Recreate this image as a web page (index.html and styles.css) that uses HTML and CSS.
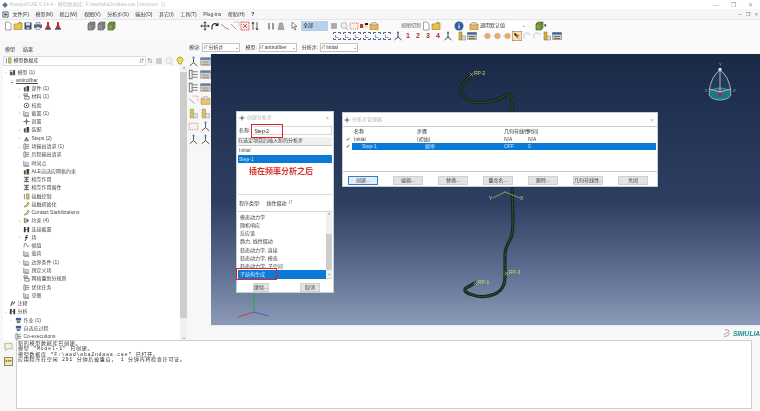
FILE: index.html
```html
<!DOCTYPE html>
<html lang="zh">
<head>
<meta charset="utf-8">
<title>Abaqus/CAE</title>
<link rel="stylesheet" href="styles.css">
</head>
<body>
<svg class="defs" width="0" height="0">
  <symbol id="doc" viewBox="0 0 10 10"><path d="M2.500 1h3.500l2 2v6h-5.500z" fill="#fff" stroke="#8a8a8a" stroke-width=".8"/></symbol>
  <symbol id="folder" viewBox="0 0 10 10"><path d="M1 3h3l1-1h4v6.500H1z" fill="#e8c24a" stroke="#9a7d20" stroke-width=".6"/><path d="M6 1l2 1" stroke="#6b9a3a"/></symbol>
  <symbol id="disk" viewBox="0 0 10 10"><path d="M1.500 1.500h7v7h-7z" fill="#3f4d6e"/><path d="M3 2h4v2.500H3z" fill="#dfe4ee"/><path d="M3.500 6h3v2.500h-3z" fill="#aab"/></symbol>
  <symbol id="print" viewBox="0 0 10 10"><path d="M3 1.500h4v2H3z" fill="#ddd" stroke="#666" stroke-width=".5"/><path d="M1 3.500h8v3.500H1z" fill="#56688a"/><path d="M3 6h4v2.500H3z" fill="#eee" stroke="#666" stroke-width=".5"/></symbol>
  <symbol id="flask" viewBox="0 0 10 10"><path d="M4 1h2v3l2 4.500H2L4 4z" fill="#b9333a"/><path d="M2.500 7h5l.5 1.500H2z" fill="#555"/></symbol>
  <symbol id="cube" viewBox="0 0 10 10"><path d="M2 3l2-2h5v6l-2 2H2z" fill="#8c8f96" stroke="#55575c" stroke-width=".6"/><path d="M2 3h5v6M7 3l2-2" fill="none" stroke="#55575c" stroke-width=".6"/></symbol>
  <symbol id="cubeg" viewBox="0 0 10 10"><path d="M2 3l2-2h5v6l-2 2H2z" fill="#7fa04a" stroke="#3f5f28" stroke-width=".7"/><path d="M2 3h5v6M7 3l2-2" fill="none" stroke="#3f5f28" stroke-width=".6"/></symbol>
  <symbol id="move" viewBox="0 0 10 10"><path d="M5 .8v8.400M.8 5h8.400M5 .8L3.800 2.200M5 .8l1.200 1.400M5 9.200L3.800 7.800M5 9.200l1.200-1.400M.8 5l1.400-1.200M.8 5l1.400 1.200M9.200 5L7.800 3.800M9.200 5L7.800 6.200" fill="none" stroke="#222" stroke-width=".8"/></symbol>
  <symbol id="rot" viewBox="0 0 10 10"><path d="M2 8.500V6a3 3 0 0 1 5-2.500" fill="none" stroke="#222" stroke-width="1.100"/><path d="M8.500 1.500v3.500H5z" fill="#222"/></symbol>
  <symbol id="mag" viewBox="0 0 10 10"><path d="M1 3l6 5" stroke="#777" stroke-width=".8"/><path d="M7 7l2 2" stroke="#c55" stroke-width=".8"/></symbol>
  <symbol id="magbox" viewBox="0 0 10 10"><path d="M4 1h5v4" fill="none" stroke="#d66" stroke-dasharray="1 .6" stroke-width=".7"/><path d="M1 3l5 5" stroke="#888" stroke-width=".8"/></symbol>
  <symbol id="fit" viewBox="0 0 10 10"><path d="M1 1h8v8H1z" fill="#f6eee8" stroke="#c33" stroke-width=".8" stroke-dasharray="1.500 .7"/><path d="M3 3l4 4M7 3L3 7" stroke="#c33" stroke-width=".8"/></symbol>
  <symbol id="ud" viewBox="0 0 10 10"><path d="M3 1v8M7 1v8M3 1L1.800 3M3 1l1.200 2M7 9L5.800 7M7 9l1.200-2" fill="none" stroke="#333" stroke-width=".8"/></symbol>
  <symbol id="grayb" viewBox="0 0 10 10"><path d="M2 2h2v6.500H2zM6 2h2v6.500H6z" fill="#999"/></symbol>
  <symbol id="plate" viewBox="0 0 10 10"><path d="M3.500 2h3l1.500 6.500H2z" fill="#aaa" stroke="#777" stroke-width=".5"/></symbol>
  <symbol id="cursor" viewBox="0 0 10 10"><path d="M3 1l5 4.500H5.500L7 8.500 5.800 9 4.500 6 3 7.500z" fill="#fff" stroke="#444" stroke-width=".6"/></symbol>
  <symbol id="gsq" viewBox="0 0 10 10"><path d="M2.500 2.500h5v5h-5z" fill="#aaa" stroke="#888" stroke-width=".5"/></symbol>
  <symbol id="gmag" viewBox="0 0 10 10"><circle cx="5" cy="4.500" r="3" fill="#eee" stroke="#aaa" stroke-width=".7"/><path d="M7 7l2 2" stroke="#aaa"/></symbol>
  <symbol id="dash" viewBox="0 0 10 10"><path d="M1 2h8v6H1z" fill="#f9f3ee" stroke="#b55" stroke-width=".7" stroke-dasharray="1.200 .8"/></symbol>
  <symbol id="colorb" viewBox="0 0 10 10"><path d="M1 3h8v4H1z" fill="#f0e0c0"/><path d="M1 3h3v4H1z" fill="#c33"/><path d="M6 2h3v2H6z" fill="#222"/></symbol>
  <symbol id="ybox" viewBox="0 0 10 10"><path d="M1 3h8v5.500H1z" fill="#e9b94e" stroke="#a07a20" stroke-width=".6"/><path d="M3 1.500h4V4H3z" fill="#ddd" stroke="#888" stroke-width=".5"/></symbol>
  <symbol id="info" viewBox="0 0 10 10"><circle cx="5" cy="5" r="4.500" fill="#2f5f9f"/><path d="M5 2.500v.900M5 4.300v3.300" stroke="#fff" stroke-width="1.100"/></symbol>
  <symbol id="brk" viewBox="0 0 10 10"><path d="M1.500 3V1.500H4M6 1.500h2.500V3M8.500 7v1.500H6M4 8.500H1.500V7" fill="none" stroke="#2a4fa0" stroke-width=".9"/><path d="M3.500 4v2.500h3" fill="none" stroke="#b06a40" stroke-width=".8"/></symbol>
  <symbol id="axes" viewBox="0 0 10 10"><path d="M5 1v5M5 6L1.500 9M5 6l3.500 3" fill="none" stroke="#233" stroke-width=".9"/><circle cx="5" cy="1.500" r="1" fill="#36a"/></symbol>
  <symbol id="ydoc" viewBox="0 0 10 10"><path d="M2 1h3v8H2z" fill="#d9b23e" stroke="#8a6d18" stroke-width=".5"/><path d="M5 5h3.500v4H5z" fill="#ddd" stroke="#777" stroke-width=".5"/></symbol>
  <symbol id="win" viewBox="0 0 10 10"><path d="M.5 1.500h9v7h-9z" fill="#c8ccd4" stroke="#666" stroke-width=".5"/><path d="M.5 1.500h9V3.500h-9z" fill="#3a5f9a"/><path d="M2 5h6v1H2zM2 7h6v1H2z" fill="#8a6d3a"/></symbol>
  <symbol id="ball" viewBox="0 0 10 10"><circle cx="5.500" cy="5" r="2.800" fill="#e8ae5e" stroke="#c99" stroke-width=".5"/><path d="M1 5h2" stroke="#ccc"/></symbol>
  <symbol id="ora" viewBox="0 0 10 10"><path d="M0 0h10v10H0z" fill="#fbe3b0" stroke="#555" stroke-width=".8"/><path d="M2 2l6 3-3 .5 3 3L4 6z" fill="#c0392b"/><path d="M2 2l3 1-2 2z" fill="#222"/></symbol>
  <symbol id="gcurve" viewBox="0 0 10 10"><path d="M2 8V4q0-2 3-2t3 2" fill="none" stroke="#ccc"/></symbol>
  <symbol id="t1" viewBox="0 0 8 8"><path d="M1 3h3v4H1zM4.500 1H7v6H4.500z" fill="#555"/><path d="M1 1h2v1.500H1z" fill="#a98a3a"/></symbol>
  <symbol id="t2" viewBox="0 0 8 8"><path d="M1 1h4v2H1zM2 4h5v3H2z" fill="none" stroke="#555" stroke-width=".8"/></symbol>
  <symbol id="t3" viewBox="0 0 8 8"><circle cx="4" cy="4" r="2.600" fill="none" stroke="#444" stroke-width=".9"/><circle cx="4" cy="4" r=".8" fill="#444"/></symbol>
  <symbol id="t4" viewBox="0 0 8 8"><path d="M4 .5v7M.5 4h7" stroke="#555" stroke-width=".9"/><circle cx="4" cy="4" r="1.600" fill="#777"/></symbol>
  <symbol id="t5" viewBox="0 0 8 8"><path d="M1 7V3l2-1v5zM4 7V1h3v6z" fill="#444"/><path d="M1 7h6" stroke="#b59a40"/></symbol>
  <symbol id="t6" viewBox="0 0 8 8"><path d="M1 7l3-5 3 5z" fill="#666"/><path d="M3 6h2" stroke="#eee"/></symbol>
  <symbol id="t7" viewBox="0 0 8 8"><path d="M1 1v6h2V1zM3.500 2h3.500M3.500 4h3.500M3.500 6h3.500" fill="none" stroke="#666" stroke-width=".8"/></symbol>
  <symbol id="t8" viewBox="0 0 8 8"><path d="M1 7h6M1 1v6" stroke="#666"/><path d="M3 3h3v3H3z" fill="none" stroke="#666" stroke-width=".7"/></symbol>
  <symbol id="t9" viewBox="0 0 8 8"><path d="M1 1.500h6M1 6.500h6M4 1.500v5" stroke="#444"/><path d="M2 3h4v2H2z" fill="#777"/></symbol>
  <symbol id="t10" viewBox="0 0 8 8"><path d="M1 1h1v6H1z" fill="#777"/><path d="M4 1h3v6H4z" fill="#d8cf4a" stroke="#555" stroke-width=".5"/></symbol>
  <symbol id="t11" viewBox="0 0 8 8"><path d="M1 7l3-3 2-3 1 2-2 3z" fill="#e3d36a" stroke="#555" stroke-width=".5"/></symbol>
  <symbol id="t12" viewBox="0 0 8 8"><path d="M5.500 1.500C4 1 3.500 2 3.500 3.500V6c0 1-.5 1.500-1.500 1.300M2.500 4H5.500" fill="none" stroke="#111" stroke-width="1"/></symbol>
  <symbol id="t13" viewBox="0 0 8 8"><path d="M1 6c1-6 2-6 3-3s2 3 3 1" fill="none" stroke="#555" stroke-width=".8"/></symbol>
  <symbol id="t14" viewBox="0 0 8 8"><path d="M4 1l3 3-3 3z" fill="#446a9c"/><path d="M1 1h2v6H1z" fill="#8a9a4a"/></symbol>
  <symbol id="t15" viewBox="0 0 8 8"><path d="M1 1h6v3H1z" fill="#3d5a9e"/><path d="M2 4.500h4V7H2z" fill="#777"/></symbol>
  <symbol id="t16" viewBox="0 0 8 8"><path d="M2 7l2-6" stroke="#2a7a3a" stroke-width="1.200"/><path d="M4 5l3-3" stroke="#444" stroke-width="1.200"/></symbol>
  <symbol id="t17" viewBox="0 0 8 8"><path d="M1 1h2v6H1zM5 1h2v6H5z" fill="#333"/><path d="M3 4h2" stroke="#c33"/></symbol>
</svg>

<div class="app">
  <header class="title">
    <svg class="logo" viewBox="0 0 8 8"><circle cx="4" cy="4" r="2.800" fill="#5a6d8c"/><path d="M0 4h8M4 0v8" stroke="#5a6d8c" stroke-width="1"/></svg>
    <span class="title-text">Abaqus/CAE 6.14-4 - 模型数据库: F:\aad\aba2ndaaa.cae [Viewport: 1]</span>
    <span class="win-ctrl"><span>—</span><span>❐</span><span>✕</span></span>
  </header>
  <nav class="menu">
    <svg class="menu-ico" viewBox="0 0 8 8"><path d="M1 1h6v6H1z" fill="#dfe6ee" stroke="#345" stroke-width=".8"/><path d="M2.500 3h3v2h-3z" fill="#345"/></svg>
    <span>文件(F)</span><span>模型(M)</span><span>视口(W)</span><span>视图(V)</span><span>分析步(S)</span><span>输出(O)</span><span>其它(I)</span><span>工具(T)</span><span>Plug-ins</span><span>帮助(H)</span><span class="help">?</span>
    <span class="mdi-ctrl"><span>–</span><span>❐</span><span>×</span></span>
  </nav>
  <div class="toolbars">
    <div class="tb">
      <svg class="ic"><use href="#doc"/></svg><svg class="ic"><use href="#folder"/></svg><svg class="ic"><use href="#disk"/></svg><svg class="ic"><use href="#print"/></svg><svg class="ic"><use href="#flask"/></svg><svg class="ic"><use href="#flask"/></svg>
      <svg class="ic m23"><use href="#cube"/></svg><svg class="ic"><use href="#cube"/></svg><svg class="ic"><use href="#cubeg"/></svg>
      <svg class="ic m84"><use href="#move"/></svg><svg class="ic"><use href="#rot"/></svg><svg class="ic"><use href="#mag"/></svg><svg class="ic"><use href="#magbox"/></svg><svg class="ic"><use href="#fit"/></svg><svg class="ic"><use href="#ud"/></svg>
      <svg class="ic m6"><use href="#grayb"/></svg><svg class="ic"><use href="#plate"/></svg>
      <svg class="ic m3"><use href="#cursor"/></svg>
      <span class="sel-all">全部</span>
      <svg class="ic m1"><use href="#gsq"/></svg><svg class="ic"><use href="#gmag"/></svg><svg class="ic"><use href="#dash"/></svg><svg class="ic"><use href="#colorb"/></svg><svg class="ic"><use href="#ybox"/></svg>
      <span class="tb-lbl">视图切割</span>
      <svg class="ic"><use href="#doc"/></svg><svg class="ic"><use href="#folder"/></svg>
      <svg class="ic m13"><use href="#info"/></svg>
      <svg class="ic m5"><use href="#ybox"/></svg>
      <span class="def-combo">通用默认值<i class="drop">⌄</i></span>
      <svg class="ic m7"><use href="#cubeg"/></svg><span class="tiny-arrow">▾</span>
    </div>
    <div class="tb tb2">
      <svg class="ic"><use href="#brk"/></svg><svg class="ic"><use href="#brk"/></svg><svg class="ic"><use href="#brk"/></svg><svg class="ic"><use href="#brk"/></svg><svg class="ic"><use href="#brk"/></svg><svg class="ic"><use href="#brk"/></svg>
      <svg class="ic m1"><use href="#axes"/></svg>
      <span class="num">1</span><span class="num">2</span><span class="num">3</span><span class="num">4</span>
      <svg class="ic"><use href="#axes"/></svg>
      <svg class="ic m4"><use href="#ydoc"/></svg><svg class="ic"><use href="#win"/></svg>
      <svg class="ic m5"><use href="#ball"/></svg><svg class="ic"><use href="#ball"/></svg><svg class="ic"><use href="#ball"/></svg>
      <svg class="ic"><use href="#ora"/></svg><svg class="ic"><use href="#gcurve"/></svg><svg class="ic"><use href="#gcurve"/></svg><svg class="ic"><use href="#ydoc"/></svg><svg class="ic"><use href="#win"/></svg>
    </div>
  </div>

  <main class="main">
    <aside class="left">
      <div class="tabs"><span class="tab on">模型</span><span class="tab">结果</span></div>
      <div class="tree-bar">
        <span class="db-combo"><svg class="ti"><use href="#t10"/></svg>模型数据库<i class="spin">⇵</i></span>
        <span class="bar-arrows">⇅</span>
        <svg class="ic"><use href="#gsq"/></svg>
        <svg class="ic"><use href="#gmag"/></svg>
        <svg class="bulb" viewBox="0 0 10 10"><path d="M5 1a3 3 0 0 1 1.500 5.600V8h-3V6.600A3 3 0 0 1 5 1z" fill="#e7e04a" stroke="#7f8a20" stroke-width=".6"/></svg>
      </div>
      <div class="tree-wrap">
        <div class="tree">
          <div class="r l0"><b>-</b><svg class="ti"><use href="#t1"/></svg>模型 (1)</div>
          <div class="r l1 u"><b>-</b>antirollbar</div>
          <div class="r l2"><b>+</b><svg class="ti"><use href="#t5"/></svg>部件 (1)</div>
          <div class="r l2"><b>+</b><svg class="ti"><use href="#t2"/></svg>材料 (1)</div>
          <div class="r l2"><b></b><svg class="ti"><use href="#t3"/></svg>校验</div>
          <div class="r l2"><b>+</b><svg class="ti"><use href="#t8"/></svg>截面 (1)</div>
          <div class="r l2"><b></b><svg class="ti"><use href="#t4"/></svg>剖面</div>
          <div class="r l2"><b>+</b><svg class="ti"><use href="#t5"/></svg>装配</div>
          <div class="r l2"><b>+</b><svg class="ti"><use href="#t6"/></svg>Steps (2)</div>
          <div class="r l2"><b>+</b><svg class="ti"><use href="#t7"/></svg>场输出请求 (1)</div>
          <div class="r l2"><b></b><svg class="ti"><use href="#t7"/></svg>历程输出请求</div>
          <div class="r l2"><b></b><svg class="ti"><use href="#t8"/></svg>时间点</div>
          <div class="r l2"><b></b><svg class="ti"><use href="#t5"/></svg>ALE自适应网格约束</div>
          <div class="r l2"><b></b><svg class="ti"><use href="#t9"/></svg>相互作用</div>
          <div class="r l2"><b></b><svg class="ti"><use href="#t9"/></svg>相互作用属性</div>
          <div class="r l2"><b></b><svg class="ti"><use href="#t10"/></svg>接触控制</div>
          <div class="r l2"><b></b><svg class="ti"><use href="#t11"/></svg>接触初始化</div>
          <div class="r l2"><b></b><svg class="ti"><use href="#t11"/></svg>Contact Stabilizations</div>
          <div class="r l2"><b>+</b><svg class="ti"><use href="#t14"/></svg>约束 (4)</div>
          <div class="r l2"><b></b><svg class="ti"><use href="#t17"/></svg>连接截面</div>
          <div class="r l2"><b>+</b><svg class="ti"><use href="#t12"/></svg>场</div>
          <div class="r l2"><b></b><svg class="ti"><use href="#t13"/></svg>幅值</div>
          <div class="r l2"><b></b><svg class="ti"><use href="#t8"/></svg>载荷</div>
          <div class="r l2"><b>+</b><svg class="ti"><use href="#t8"/></svg>边界条件 (1)</div>
          <div class="r l2"><b></b><svg class="ti"><use href="#t8"/></svg>预定义场</div>
          <div class="r l2"><b></b><svg class="ti"><use href="#t2"/></svg>网格重划分规则</div>
          <div class="r l2"><b></b><svg class="ti"><use href="#t7"/></svg>优化任务</div>
          <div class="r l2"><b></b><svg class="ti"><use href="#t8"/></svg>草图</div>
          <div class="r l0"><b></b><svg class="ti"><use href="#t16"/></svg>注释</div>
          <div class="r l0"><b>-</b><svg class="ti"><use href="#t17"/></svg>分析</div>
          <div class="r l1"><b>-</b><svg class="ti"><use href="#t15"/></svg>作业 (1)</div>
          <div class="r l1"><b></b><svg class="ti"><use href="#t15"/></svg>自适应过程</div>
          <div class="r l1"><b></b><svg class="ti"><use href="#t7"/></svg>Co-executions</div>
        </div>
        <div class="vscroll"><span class="sb-btn">⌃</span><span class="sb-thumb"></span><span class="sb-btn">⌄</span></div>
      </div>
    </aside>

    <section class="right">
      <div class="ctx">
        <span class="ctx-lbl">模块:</span><span class="ctx-combo"><i class="ud">⇵</i>分析步<i class="drop">⌄</i></span>
        <span class="ctx-lbl">模型:</span><span class="ctx-combo"><i class="ud">⇵</i>antirollber<i class="drop">⌄</i></span>
        <span class="ctx-lbl">分析步:</span><span class="ctx-combo"><i class="ud">⇵</i>Initial<i class="drop">⌄</i></span>
      </div>
      <div class="work">
        <div class="toolbox">
          <svg class="tbx"><use href="#axes"/></svg><svg class="tbx"><use href="#win"/></svg>
          <svg class="tbx"><use href="#t7"/></svg><svg class="tbx"><use href="#win"/></svg>
          <svg class="tbx"><use href="#t7"/></svg><svg class="tbx"><use href="#win"/></svg>
          <svg class="tbx"><use href="#magbox"/></svg><svg class="tbx"><use href="#ybox"/></svg>
          <svg class="tbx"><use href="#ydoc"/></svg><svg class="tbx"><use href="#ydoc"/></svg>
          <svg class="tbx"><use href="#dash"/></svg><svg class="tbx"><use href="#axes"/></svg>
          <svg class="tbx"><use href="#axes"/></svg><svg class="tbx"><use href="#axes"/></svg>
        </div>
        <div class="vp-col">
          <div class="viewport">
            <svg class="scene" viewBox="211 54 549 271">
              <g fill="none" stroke-linejoin="round" stroke-linecap="round">
                <path class="wire" d="M471 75Q463 83 460 90Q461 96 473 102Q483 104 497 100Q506 95 509 94Q513 96 512 104L512 188L513 217Q513 232 511 238Q505 248 505 254L505 277Q505 288 497 293Q484 299 473 295Q462 292 466 288L475 283"/>
                <path class="wire2" d="M471 75Q463 83 460 90Q461 96 473 102Q483 104 497 100Q506 95 509 94Q513 96 512 104L512 188L513 217Q513 232 511 238Q505 248 505 254L505 277Q505 288 497 293Q484 299 473 295Q462 292 466 288L475 283"/>
                <path class="ax" d="M505 192L493 198M505 192L520 198M470 73L473 76M473 73L470 76M505 272L508 275M508 272L505 275M474 282L477 285M477 282L474 285"/>
                <path class="tri-g" d="M254 290V312"/><path class="tri-r" d="M254 312L238 317"/><path class="tri-b" d="M254 312L268 316"/>
              </g>
              <text class="lbl" x="474" y="75">RP-2</text>
              <text class="lbl" x="509" y="274">RP-3</text>
              <text class="lbl" x="478" y="284">RP-1</text>
              <text class="lbl" x="489" y="200">Y</text>
              <text class="lbl" x="520" y="200">X</text>
              <g class="cube-ico">
                <ellipse class="cube-base" cx="720" cy="94" rx="11" ry="6"/>
                <path class="cube-line" d="M709 92Q711 76 720 70Q729 76 731 92M720 70V94M720 92L709 89M720 92L731 89"/>
                <rect class="cube-top" x="718.500" y="68" width="3" height="3"/>
                <circle class="cube-dot" cx="720" cy="94" r="1.800"/>
                <text class="cube-t" x="719" y="66">Y</text><text class="cube-t" x="705" y="92">Z</text><text class="cube-t" x="733" y="92">X</text>
              </g>
            </svg>
          </div>
          <div class="brand"><svg class="ds" viewBox="0 0 10 10"><path d="M2 1q6-1 4 2-2 1-1 1 3 0 1 3-3 2-5 1M1 6l3-1" fill="none" stroke="#888" stroke-width=".8"/></svg><span>SIMULIA</span></div>
        </div>
      </div>
    </section>
  </main>

  <footer class="msg">
    <div class="msg-tools">
      <svg class="msg-ic1" viewBox="0 0 10 10"><path d="M1 1h8v6H4L2 9V7H1z" fill="#f4f2d0" stroke="#888" stroke-width=".6"/></svg>
      <span class="msg-ic2">&gt;&gt;&gt;</span>
    </div>
    <div class="msg-box">
      <div>新的模型数据库已创建。</div>
      <div>模型 "Model-1" 已创建。</div>
      <div>模型数据库 "F:\aad\aba2ndaaa.cae" 已打开。</div>
      <div>应用程序在空闲 291 分钟后被重启， 1 分钟内将检查许可证。</div>
    </div>
  </footer>

  <section class="dlg d1">
    <div class="dlg-title"><svg class="dlg-ico"><use href="#t4"/></svg><span>创建分析步</span><i class="x">×</i></div>
    <div class="name-row"><span>名称:</span><span class="name-in">Step-2</span></div>
    <div class="after-lbl">在选定项目后插入新的分析步</div>
    <div class="steps"><div class="si">Initial</div><div class="si sel">Step-1</div></div>
    <div class="note">插在频率分析之后</div>
    <div class="ptype"><span>程序类型:</span><span class="pcombo">线性摄动<i class="ud2">⇵</i></span></div>
    <div class="plist">
      <div class="plist-items">
        <div class="pi">模态动力学</div>
        <div class="pi">随机响应</div>
        <div class="pi">反应谱</div>
        <div class="pi">静力, 线性摄动</div>
        <div class="pi">稳态动力学, 直接</div>
        <div class="pi">稳态动力学, 模态</div>
        <div class="pi">稳态动力学, 子空间</div>
        <div class="pi sel">子结构生成</div>
      </div>
      <div class="psb"><span class="sb-btn">⌃</span><span class="psb-gap"></span><span class="psb-thumb"></span><span class="sb-btn">⌄</span></div>
    </div>
    <div class="d1-btns"><span class="btn first">继续...</span><span class="btn second">取消</span></div>
    <span class="red r1"></span>
    <span class="red r2"></span>
  </section>

  <section class="dlg d2">
    <div class="dlg-title t2"><svg class="dlg-ico"><use href="#t4"/></svg><span>分析步管理器</span><i class="x">×</i></div>
    <div class="mgr-row head"><span></span><span>名称</span><span>步骤</span><span>几何非线性</span><span>时间</span></div>
    <div class="mgr-row"><span class="chk">✔</span><span>Initial</span><span>(初始)</span><span>N/A</span><span>N/A</span></div>
    <div class="mgr-row on"><span class="chk">✔</span><span class="p1">Step-1</span><span class="p2">频率</span><span>OFF</span><span>0</span></div>
    <div class="mgr-btns">
      <span class="btn blue">创建...</span><span class="btn">编辑...</span><span class="btn">替换...</span><span class="btn">重命名...</span><span class="btn">删除...</span><span class="btn">几何非线性...</span><span class="btn">关闭</span>
    </div>
  </section>
</div>
</body>
</html>
```

FILE: styles.css
```css
* { box-sizing: border-box; }
html, body { margin: 0; padding: 0; }
body { width: 760px; height: 411px; overflow: hidden; background: #fff; }
.defs { position: absolute; }
i { font-style: normal; }

.app {
  position: relative;
  width: 760px;
  height: 411px;
  overflow: hidden;
  display: flex;
  flex-direction: column;
  font: 5px/1 "Liberation Sans", "Noto Sans CJK SC", sans-serif;
  color: #3a3a3a;
  background: #f7f7f7;
  filter: blur(.3px);
}

.title { height: 9px; flex: none; display: flex; align-items: center; padding-left: 2px; background: #fff; color: #c2c2c2; }
.logo { width: 6px; height: 6px; margin-right: 1px; }
.title-text { white-space: nowrap; }
.win-ctrl { margin-left: auto; display: flex; gap: 12px; padding-right: 7px; color: #999; font-size: 6px; }

.menu { height: 10px; flex: none; display: flex; align-items: center; gap: 6.500px; padding-left: 2px; background: #f6f6f6; white-space: nowrap; }
.menu-ico { width: 7px; height: 7px; margin-right: -3px; }
.help { color: #223; font-weight: bold; }
.mdi-ctrl { margin-left: auto; display: flex; gap: 5px; padding-right: 2px; color: #666; }

.toolbars { flex: none; height: 22px; background: #fafafa; border-top: 1px solid #e6e6e6; }
.tb { height: 11px; display: flex; align-items: center; padding-left: 3px; }
.tb2 { height: 10px; padding-left: 332px; }
.ic { width: 10px; height: 10px; flex: none; }
.m1 { margin-left: 1px; } .m3 { margin-left: 3px; } .m4 { margin-left: 4px; } .m5 { margin-left: 5px; }
.m6 { margin-left: 6px; } .m7 { margin-left: 7px; } .m13 { margin-left: 13px; } .m23 { margin-left: 23px; } .m84 { margin-left: 84px; }
.sel-all { width: 27px; height: 10px; margin-left: 2px; padding: 2px; background: #b8d0ec; color: #223; }
.tb-lbl { width: 20px; margin-left: 22px; color: #666; white-space: nowrap; overflow: hidden; }
.def-combo { width: 48px; height: 9px; padding: 2px 1px 2px 1px; background: #fff; display: flex; justify-content: space-between; white-space: nowrap; }
.drop { color: #555; }
.tiny-arrow { color: #222; }
.num { width: 10px; text-align: center; color: #b02a2a; font: bold 7px/10px "Liberation Sans", sans-serif; }

.main { flex: 1; display: flex; min-height: 0; }
.left { width: 187px; flex: none; display: flex; flex-direction: column; }
.tabs { height: 14px; padding: 5px 0 0 4px; display: flex; gap: 6px; }
.tab { padding: 1px 1px; }
.tree-bar { height: 11px; display: flex; align-items: center; padding-left: 3px; }
.db-combo { width: 143px; height: 10px; display: flex; align-items: center; padding: 0 1px 0 0; background: #fff; border: 1px solid #dcdcdc; color: #333; }
.spin { margin-left: auto; color: #666; }
.bar-arrows { width: 8px; text-align: center; color: #555; }
.bulb { width: 10px; height: 10px; margin-left: 1px; }
.tree-bar .ic { opacity: .55; }

.tree-wrap { flex: 1; min-height: 0; display: flex; margin-left: 3px; overflow: hidden; }
.tree { flex: 1; background: #fff; padding-top: 2px; overflow: hidden; }
.r { height: 8.280px; display: flex; align-items: center; white-space: nowrap; color: #4a4a4a; }
.r b { width: 5px; flex: none; font-weight: normal; font-size: 4px; color: #999; text-align: center; }
.l0 { padding-left: 0; }
.l1 { padding-left: 6px; }
.l2 { padding-left: 14px; }
.u { text-decoration: underline; padding-left: 5px; }
.u b { width: 8px; }
.ti { width: 7px; height: 7px; flex: none; margin: 0 1.500px 0 1px; }
.vscroll { width: 7px; flex: none; background: #f0f0f0; display: flex; flex-direction: column; }
.sb-btn { height: 6px; flex: none; text-align: center; color: #555; font-size: 5px; line-height: 6px; }
.sb-thumb { height: 246px; background: #cdcdcd; }
.vscroll .sb-btn:last-child { margin-top: auto; }

.right { flex: 1; min-width: 0; display: flex; flex-direction: column; }
.ctx { height: 13px; flex: none; display: flex; align-items: center; padding-left: 2px; background: #fafafa; }
.ctx-lbl { margin: 0 2px 0 0; white-space: nowrap; }
.ctx-combo { width: 38px; height: 9px; margin-right: 5px; display: flex; align-items: center; background: #fff; border: 1px solid #c4c4c4; white-space: nowrap; }
.ud { width: 5px; color: #555; font-size: 4px; }
.ctx-combo .drop { margin-left: auto; }

.work { flex: 1; min-height: 0; display: flex; }
.toolbox { width: 24px; flex: none; display: grid; grid-template-columns: 11px 11px; grid-auto-rows: 13px; gap: 0 1px; padding: 2px 0 0 1px; align-content: start; }
.tbx { width: 11px; height: 11px; opacity: .8; }

.vp-col { flex: 1; min-width: 0; display: flex; flex-direction: column; }
.viewport { height: 271px; flex: none; background: linear-gradient(#1a2947 0%, #2e3f62 55%, #5d6e91 80%, #8b9ab6 100%); }
.scene { display: block; width: 549px; height: 271px; }
.wire { stroke: #16261c; stroke-width: 3.200; }
.wire2 { stroke: #3f5f38; stroke-width: 1; stroke-dasharray: 1 1.500; }
.ax { stroke: #c9d96c; stroke-width: .6; }
.tri-g { stroke: #2fa84a; stroke-width: 1.200; }
.tri-r { stroke: #c9413a; stroke-width: 1; }
.tri-b { stroke: #3a5fd0; stroke-width: 1; }
.lbl { fill: #c9d96c; font: 5px "Liberation Sans", sans-serif; }
.cube-base { fill: #1f7585; stroke: #b9dbe4; stroke-width: .7; }
.cube-line { fill: #2b4a68; fill-opacity: .4; stroke: #b9dbe4; stroke-width: .8; }
.cube-top { fill: #d6e2ea; }
.cube-dot { fill: #c21f3a; }
.cube-t { fill: #9fb4c4; font: 4px "Liberation Sans", sans-serif; }

.brand { flex: 1; display: flex; align-items: center; justify-content: flex-end; gap: 1px; background: #f7f7f7; border-top: 1px solid #dff0ea; color: #1b8f8f; font: italic bold 6.600px "Liberation Sans", sans-serif; white-space: nowrap; }
.ds { width: 9px; height: 9px; }

.msg { height: 71px; flex: none; display: flex; background: #f7f7f7; padding-bottom: 2px; }
.msg-tools { width: 16px; flex: none; display: flex; flex-direction: column; align-items: center; padding-top: 2px; gap: 5px; }
.msg-ic1 { width: 9px; height: 10px; margin-left: 1px; }
.msg-ic2 { width: 9px; height: 9px; margin-left: 1px; background: #f3e9a0; border: 1px solid #8a8a6a; color: #222; font: bold 3.500px/7px "Liberation Mono", monospace; text-align: center; overflow: hidden; }
.msg-box { width: 736px; background: #fff; border: 1px solid #cfcfcf; padding: 1px 0 0 1px; font: 5.100px/5.300px "Liberation Mono", "Noto Sans CJK SC", monospace; letter-spacing: .65px; color: #333; white-space: nowrap; }
.msg-box div { height: 5.300px; overflow: visible; }

.dlg { position: absolute; background: #fff; border: 1px solid #c9cdd4; display: flex; flex-direction: column; }
.d1 { left: 236px; top: 111px; width: 98px; height: 182px; padding: 0 1px; }
.d2 { left: 342px; top: 112px; width: 316px; height: 75px; }
.dlg-title { height: 11px; flex: none; display: flex; align-items: center; color: #b8b8b8; }
.t2 { height: 14px; border-bottom: 1px solid #c8c8c8; }
.dlg-ico { width: 6px; height: 6px; margin: 0 2px 0 1px; }
.x { margin-left: auto; margin-right: 3px; color: #aaa; font-size: 6px; }
.name-row { height: 14px; flex: none; display: flex; align-items: center; gap: 3px; padding: 0 0 0 1px; color: #333; }
.name-in { flex: 1; height: 9px; padding: 2px 0 0 1px; border: 1px solid #d6d6d6; border-left: 0; color: #222; }
.after-lbl { height: 8px; flex: none; padding-top: 1px; background: #f0f0f0; color: #444; white-space: nowrap; }
.steps { flex: none; border-top: 1px solid #c8c8c8; }
.si { height: 8.500px; padding: 2px 0 0 1px; color: #555; }
.si.sel, .pi.sel { background: #0a7ad6; color: #cfe6fb; }
.note { height: 32px; flex: none; padding: 3px 0 0 11px; color: #d8322a; font: bold 8px/10px "Noto Sans CJK SC", sans-serif; white-space: nowrap; border-bottom: 1px solid #dcdcdc; }
.ptype { height: 16px; flex: none; display: flex; align-items: center; gap: 6px; background: #fff; padding: 0 0 0 1px; }
.pcombo { width: 26px; display: flex; justify-content: space-between; white-space: nowrap; }
.ud2 { color: #666; font-size: 4px; }
.plist { height: 68px; flex: none; display: flex; border: 1px solid #d4d4d4; border-left: 0; border-right: 0; }
.plist-items { flex: 1; padding-top: .500px; }
.pi { height: 8.280px; padding: 2px 0 0 2px; white-space: nowrap; color: #444; }
.psb { width: 6px; flex: none; display: flex; flex-direction: column; background: #f0f0f0; }
.psb-gap { height: 16px; }
.psb-thumb { height: 36px; background: #cdcdcd; }
.d1-btns { flex: 1; display: flex; gap: 31px; align-items: flex-start; padding: 4px 0 0 15px; }
.btn { width: 30px; height: 9px; flex: none; background: #e3e3e3; border: 1px solid #cfcfcf; text-align: center; color: #444; line-height: 7px; white-space: nowrap; overflow: hidden; }
.d1-btns .first { width: 16px; }
.d1-btns .second { width: 20px; }
.btn.blue { background: #e6eef7; border-color: #2c7fd0; }
.red { position: absolute; border: 1px solid #e0202a; }
.r1 { left: 14px; top: 12px; width: 32px; height: 14px; }
.r2 { left: -1px; top: 156px; width: 41px; height: 12px; }

.mgr-row { height: 7px; flex: none; display: grid; grid-template-columns: 9px 65px 87px 24px 1fr; align-items: center; margin-right: 1px; color: #444; white-space: nowrap; }
.mgr-row span:nth-child(2) { padding-left: 2px; }
.head { height: 9px; color: #222; }
.chk { color: #2f7d3a; font-size: 5px; text-align: center; }
.mgr-row.on span { background: #0a7ad6; color: #cfe6fb; height: 7px; line-height: 7px; }
.mgr-row.on .chk { background: none; color: #2f7d3a; }
.mgr-row.on .p1 { padding-left: 10px; }
.mgr-row.on .p2 { padding-left: 8px; }
.mgr-btns { margin-top: auto; height: 15px; display: flex; gap: 15px; padding: 4px 0 0 5px; border-top: 1px solid #c8c8c8; }
```
